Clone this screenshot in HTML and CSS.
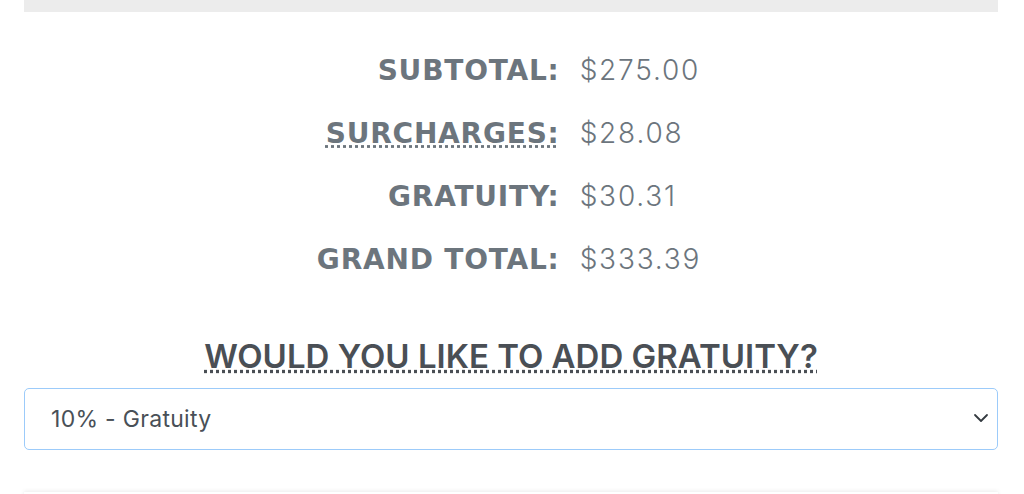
FILE: index.html
```html
<!DOCTYPE html>
<html lang="en">
<head>
  <meta charset="UTF-8">
  <meta name="viewport" content="width=device-width, initial-scale=1.0">
  <link rel="stylesheet" href="styles.css">
</head>
<body>
  <div class="page">
    <div class="top-bar"></div>

    <div class="totals">
      <div class="label">SUBTOTAL:</div>
      <div class="value">$275.00</div>

      <div class="label"><abbr title="Service and delivery surcharges">SURCHARGES:</abbr></div>
      <div class="value">$28.08</div>

      <div class="label">GRATUITY:</div>
      <div class="value">$30.31</div>

      <div class="label">GRAND TOTAL:</div>
      <div class="value">$333.39</div>
    </div>

    <h2 class="tip-title"><abbr title="Gratuity is optional">WOULD YOU LIKE TO ADD GRATUITY?</abbr></h2>

    <div class="select-wrap">
      <select id="gratuity" class="tip-select">
        <option>No Gratuity</option>
        <option>5% - Gratuity</option>
        <option selected>10% - Gratuity</option>
        <option>15% - Gratuity</option>
        <option>20% - Gratuity</option>
      </select>
      <svg class="chevron" width="16" height="10" viewBox="0 0 16 10">
        <path d="M2 2l6 6 6-6" fill="none" stroke="#343a40" stroke-width="1.8" stroke-linecap="round" stroke-linejoin="round"/>
      </svg>
    </div>

    <div class="next-card"></div>
  </div>
</body>
</html>
```

FILE: styles.css
```css
body {
  margin: 0;
  background: #fff;
  font-family: Inter, "Liberation Sans", sans-serif;
}

.page {
  padding: 0 26px 0 24px;
}

.top-bar {
  height: 12px;
  background-color: #ececec;
}

.totals {
  display: grid;
  grid-template-columns: auto auto;
  justify-content: center;
  align-items: baseline;
  column-gap: 20px;
  margin-top: 27px;
  padding-right: 4px;
  color: #6c757d;
}

.label {
  font-family: "DejaVu Sans", sans-serif;
  font-weight: bold;
  font-size: 28px;
  letter-spacing: 0.8px;
  line-height: 62px;
  text-align: right;
}

.value {
  font-family: Inter, sans-serif;
  font-weight: 300;
  font-size: 28px;
  letter-spacing: 1.8px;
  line-height: 62px;
}

abbr[title] {
  text-decoration: underline dotted;
  cursor: help;
}

.tip-title {
  margin: 45px 0 0;
  text-align: center;
  font-size: 33px;
  font-weight: 600;
  line-height: 40px;
  color: #4a4f55;
}

.select-wrap {
  position: relative;
  margin-top: 12px;
}

.tip-select {
  display: block;
  width: 100%;
  height: 62px;
  padding: 0 26px;
  border: 1px solid #9ccbfa;
  border-radius: 5px;
  background: #fff;
  font-family: Inter, sans-serif;
  font-size: 23px;
  letter-spacing: 0.3px;
  color: #495057;
  appearance: none;
  outline: none;
}

.chevron {
  position: absolute;
  right: 9px;
  top: 25px;
}

.next-card {
  margin-top: 42px;
  height: 20px;
  background: #fff;
  box-shadow: 0 -1px 4px rgba(0, 0, 0, 0.08);
}
```
